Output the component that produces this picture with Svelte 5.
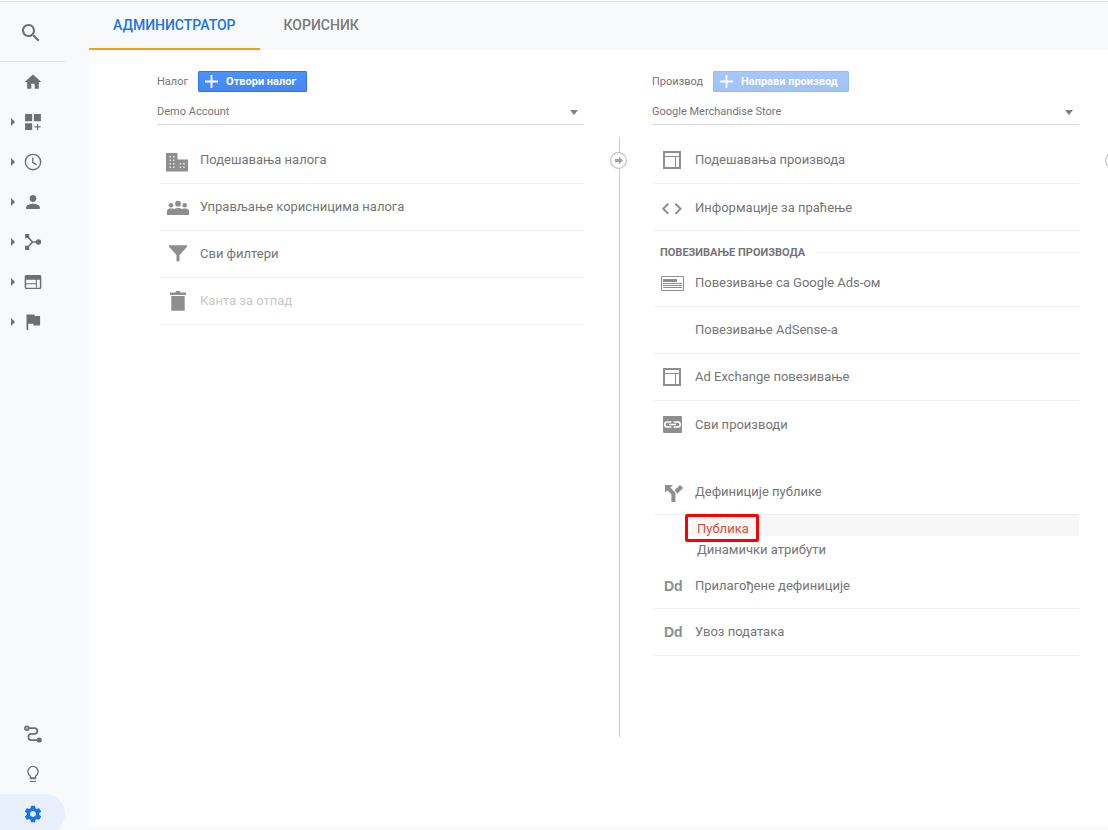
<script>
  const NAV = [
    { icon: 'home', expandable: false },
    { icon: 'dashboard', expandable: true },
    { icon: 'clock', expandable: true },
    { icon: 'person', expandable: true },
    { icon: 'flow', expandable: true },
    { icon: 'web', expandable: true },
    { icon: 'flag', expandable: true },
  ]
  const NAV_BOTTOM = ['path', 'bulb', 'gear']

  const ACCOUNT = [
    { icon: 'building', label: 'Подешавања налога' },
    { icon: 'people', label: 'Управљање корисницима налога' },
    { icon: 'filter', label: 'Сви филтери' },
    { icon: 'trash', label: 'Канта за отпад', disabled: true },
  ]
  const PROPERTY = [
    { icon: 'window', label: 'Подешавања производа' },
    { icon: 'code', label: 'Информације за праћење', low: true },
  ]
  const LINKING = [
    { icon: 'ads', label: 'Повезивање са Google Ads-ом' },
    { icon: '', label: 'Повезивање AdSense-а' },
    { icon: 'window', label: 'Ad Exchange повезивање' },
    { icon: 'link', label: 'Сви производи', low: true, plain: true },
  ]
  const DATA = [
    { icon: 'dd', label: 'Прилагођене дефиниције', low: true },
    { icon: 'dd', label: 'Увоз података' },
  ]

  let tab = $state('admin')
</script>

{#snippet navIcon(name)}
  <svg class="nav-icon" viewBox="0 0 24 24" fill="currentColor">
    {#if name === 'home'}
      <path d="M10 20v-6h4v6h5v-8h3L12 3 2 12h3v8z" />
    {:else if name === 'dashboard'}
      <path d="M2.500 2.500h8.500v8.500H2.500zM13 2.500h8.500v8.500H13zM2.500 13.500h8.500v8H2.500zM16.800 14.300h1.400v2.900h2.900v1.400h-2.900v2.900h-1.400v-2.900h-2.900v-1.400h2.900z" />
    {:else if name === 'clock'}
      <circle cx="12" cy="12" r="9.200" fill="none" stroke="currentColor" stroke-width="1.700" />
      <path d="M11.700 6.500v6l4.600 3" fill="none" stroke="currentColor" stroke-width="1.600" />
    {:else if name === 'person'}
      <path d="M12 12c2.200 0 4.100-1.900 4.100-4.200S14.200 3.600 12 3.600 7.900 5.500 7.900 7.800 9.800 12 12 12zm0 2c-3 0-8.200 1.400-8.200 4.200V20.500h16.400v-2.300C20.200 15.400 15 14 12 14z" />
    {:else if name === 'flow'}
      <path d="M5 5l6.500 7L5 19M11 12h7" fill="none" stroke="currentColor" stroke-width="1.900" />
      <path d="M2.500 2.500h5v5h-5zM2.500 16.500h5v5h-5z" />
      <circle cx="18.600" cy="12" r="3.200" />
    {:else if name === 'web'}
      <path fill-rule="evenodd" d="M4 3.500h16a2 2 0 0 1 2 2v13a2 2 0 0 1-2 2H4a2 2 0 0 1-2-2v-13a2 2 0 0 1 2-2zM3.800 9.300v4.100h11.700V9.300zM3.800 14.600v4.200h11.700v-4.200zM16.700 9.300v9.500h3.500V9.300z" />
    {:else if name === 'flag'}
      <path d="M14 4.800l-.4-1.800H4.200v18.500h2.100v-7.300h6l.4 2h7.800V4.800z" />
    {:else if name === 'path'}
      <path d="M5.500 5h8.300a3.400 3.400 0 0 1 0 6.800h-3.600a3.700 3.700 0 0 0 0 7.400H19" fill="none" stroke="currentColor" stroke-width="2.100" />
      <circle cx="4.600" cy="5" r="2.500" fill="#aaa" stroke="currentColor" stroke-width="1.600" />
      <circle cx="19.500" cy="19.200" r="3.100" />
    {:else if name === 'bulb'}
      <path d="M9 17v-2.300c-1.900-1.200-3.200-3.100-3.200-5.300a6.200 6.600 0 0 1 12.400 0c0 2.200-1.300 4.100-3.200 5.300V17z" fill="none" stroke="currentColor" stroke-width="1.600" />
      <path d="M8.200 16.300h7.600v2H8.200zM8.400 20.300h7.200v1.400H8.400z" />
    {:else if name === 'gear'}
      <path d="M19.430 12.980c.040-.320.070-.640.070-.980s-.030-.660-.070-.980l2.110-1.650c.190-.150.240-.420.120-.640l-2-3.460c-.120-.220-.390-.300-.610-.220l-2.490 1c-.520-.400-1.080-.730-1.690-.980l-.380-2.650C14.460 2.180 14.250 2 14 2h-4c-.250 0-.460.180-.490.420l-.380 2.650c-.610.250-1.170.590-1.690.980l-2.490-1c-.230-.090-.490 0-.610.220l-2 3.460c-.130.220-.070.490.120.640l2.110 1.650c-.040.320-.070.650-.070.980s.030.660.070.980l-2.110 1.650c-.190.150-.240.420-.120.640l2 3.460c.120.220.390.300.610.220l2.490-1c.520.400 1.080.730 1.690.980l.380 2.650c.030.240.240.420.490.420h4c.250 0 .460-.180.490-.420l.380-2.650c.610-.250 1.170-.590 1.690-.980l2.490 1c.230.090.490 0 .610-.220l2-3.460c.120-.220.070-.490-.120-.640l-2.110-1.650zM12 15.500c-1.930 0-3.500-1.570-3.500-3.500s1.570-3.500 3.500-3.500 3.500 1.570 3.500 3.500-1.570 3.500-3.500 3.500z" />
    {/if}
  </svg>
{/snippet}

{#snippet rowIcon(name)}
  <svg class="row-icon" viewBox="0 0 28 28" fill="currentColor">
    {#if name === 'building'}
      <path d="M3 7h11.500v6.500H25V25.500H3z" />
      <path d="M6.500 10h1.500v1.500H6.500zM10 10h1.500v1.500H10zM6.500 13.500h1.500v1.500H6.500zM10 13.500h1.500v1.500H10zM6.500 17h1.500v1.500H6.500zM10 17h1.500v1.500H10zM6.500 20.500h1.500v1.500H6.500zM10 20.500h1.500v1.500H10zM16.700 17h1.500v1.500h-1.500zM20.200 17h1.500v1.500h-1.500zM16.700 20.500h1.500v1.500h-1.500zM20.200 20.500h1.500v1.500h-1.500z" fill="#e8e8e8" />
    {:else if name === 'people'}
      <circle cx="15" cy="10.700" r="2.900" />
      <circle cx="8" cy="12.300" r="2.300" />
      <circle cx="21.700" cy="12.300" r="2.300" />
      <path d="M4 22v-4c0-1.800 2.200-2.400 4.300-2.400 1.200 0 2.200.1 2.900.4 1-.6 2.400-.9 3.900-.9s2.900.3 3.900.9c.7-.3 1.500-.4 2.600-.4 2.200 0 4.400.6 4.400 2.400v4z" />
    {:else if name === 'filter'}
      <path d="M6 5.300h18v1.500L16.500 15v6.200h-3V15L6 6.800z" />
    {:else if name === 'trash'}
      <path d="M7 5.500h5.300l1-1.500h3.400l1 1.500H23V8H7zM8.300 9h13.400v14.800H8.300z" />
    {:else if name === 'window'}
      <path d="M6 6h16v16H6z" fill="none" stroke="currentColor" stroke-width="2" />
      <path d="M6 10.500h16M17.500 10.500V22" fill="none" stroke="currentColor" stroke-width="1" />
    {:else if name === 'code'}
      <path d="M10.300 10.700L5.200 15.800l5.100 5.100M17.400 10.700l5.100 5.100-5.100 5.100" fill="none" stroke="currentColor" stroke-width="2" />
    {:else if name === 'ads'}
      <path d="M3.500 7.500h22v14h-22z" fill="none" stroke="currentColor" />
      <path d="M5 10h14v3H5zM5 14h19v1H5zM5 16h19v1H5zM5 18h19v1H5z" />
    {:else if name === 'link'}
      <rect x="5" y="6" width="19" height="17" rx="1" />
      <path d="M13.300 12h-4a2.500 2.500 0 0 0 0 5h4M15.700 12h4a2.500 2.500 0 0 1 0 5h-4M11 14.500h7" fill="none" stroke="#fff" stroke-width="1.600" />
    {:else if name === 'split'}
      <path d="M7 8h8l-2.600 2.600 5 5.200V25h-4v-7.500L9.500 13.300 7 15.800z" />
      <path d="M22 8L25.200 11l-6 5.700-2.500-3.500z" />
    {:else if name === 'dd'}
      <text x="6" y="19" class="dd">Dd</text>
    {/if}
  </svg>
{/snippet}

{#snippet rows(items)}
  {#each items as item}
    <div class="row" class:low={item.low} class:disabled={item.disabled} class:plain={item.plain} class:text-icon={item.icon === 'dd'}>
      {@render rowIcon(item.icon)}
      <span>{item.label}</span>
    </div>
  {/each}
{/snippet}

{#snippet divider()}
  <div class="divider">
    <svg class="knob" viewBox="0 0 17 17">
      <circle cx="8.500" cy="8.500" r="7.900" fill="#fff" stroke="#c4c4c4" stroke-width="1.200" />
      <path d="M5 7h4V4.800L13 8.500 9 12.200V10H5z" fill="#a0a0a0" />
    </svg>
  </div>
{/snippet}

{#snippet head(label, action, value, off)}
  <div class="head">
    <span class="head-label">{label}</span>
    <button class="create" disabled={off}>
      <svg viewBox="0 0 13 13"><path d="M6.500 0v13M0 6.500h13" stroke="#fff" stroke-width="1.800" /></svg>
      <span>{action}</span>
    </button>
  </div>
  <div class="picker">
    <span>{value}</span>
    <i class="arrow"></i>
  </div>
{/snippet}

<div class="app">
  <nav>
    <div class="search">
      <svg viewBox="0 0 24 24" fill="currentColor">
        <path d="M15.500 14h-.790l-.280-.270C15.410 12.590 16 11.110 16 9.500 16 5.910 13.090 3 9.500 3S3 5.910 3 9.500 5.910 16 9.500 16c1.610 0 3.090-.590 4.230-1.570l.270.280v.790l5 4.990L20.490 19l-4.990-5zm-6 0C7.010 14 5 11.990 5 9.500S7.010 5 9.500 5 14 7.010 14 9.500 11.990 14 9.500 14z" />
      </svg>
    </div>
    {#each NAV as item}
      <div class="nav-item">
        <i class="caret" class:hidden={!item.expandable}></i>
        {@render navIcon(item.icon)}
      </div>
    {/each}
    <div class="spacer"></div>
    {#each NAV_BOTTOM as icon}
      <div class="nav-item" class:active={icon === 'gear'}>
        <i class="caret hidden"></i>
        {@render navIcon(icon)}
      </div>
    {/each}
  </nav>

  <main>
    <div class="tabs">
      <button class="tab" class:current={tab === 'admin'} onclick={() => (tab = 'admin')}>АДМИНИСТРАТОР</button>
      <button class="tab" class:current={tab === 'user'} onclick={() => (tab = 'user')}>КОРИСНИК</button>
    </div>

    <div class="panel">
      <section class="col account">
        {@render head('Налог', 'Отвори налог', 'Demo Account', false)}
        <div class="rows">
          {@render rows(ACCOUNT)}
        </div>
      </section>

      {@render divider()}

      <section class="col property">
        {@render head('Производ', 'Направи производ', 'Google Merchandise Store', true)}
        <div class="rows">
          {@render rows(PROPERTY)}
          <div class="group"><span>ПОВЕЗИВАЊЕ ПРОИЗВОДА</span></div>
          {@render rows(LINKING)}
          <div class="gap"></div>
          <div class="row low">
            {@render rowIcon('split')}
            <span>Дефиниције публике</span>
          </div>
          <div class="subs">
            <div class="sub selected">Публика<i class="mark"></i></div>
            <div class="sub">Динамички атрибути</div>
          </div>
          {@render rows(DATA)}
        </div>
      </section>

      {@render divider()}
    </div>
  </main>
</div>

<style>
  :global(body) {
    overflow: hidden;
    background: #fff;
  }

  .app {
    display: flex;
    box-sizing: border-box;
    height: 829px;
    margin-top: 1px;
    border-top: 1px solid #dadce0;
    background: #f8f9fb;
    overflow: hidden;
    font-family: Roboto, 'Noto Sans', sans-serif;
    color: #757575;
  }

  /* sidebar */
  nav {
    display: flex;
    flex-direction: column;
    flex: 0 0 89px;
    height: 832px;
    color: #6f6f6f;
  }

  .search {
    box-sizing: border-box;
    width: 65px;
    height: 60px;
    padding: 19px 0 0 19px;
    border-bottom: 1px solid #e3e5e8;
  }
  .search svg { display: block; width: 24px; height: 24px; }

  .nav-item {
    display: flex;
    align-items: center;
    gap: 8px;
    flex: 0 0 40px;
    width: 65px;
    padding-left: 11px;
    box-sizing: border-box;
  }
  .nav-item.active {
    background: #e8f0fe;
    color: #1a73e8;
    border-radius: 0 20px 20px 0;
  }
  .nav-icon { width: 20px; height: 20px; }
  .spacer { flex: 1; }

  .caret {
    width: 0;
    height: 0;
    border: 4px solid transparent;
    border-left-color: #6f6f6f;
    border-right: 0;
  }
  .caret.hidden { visibility: hidden; }

  /* tabs */
  main {
    display: flex;
    flex-direction: column;
    flex: 1;
    min-width: 0;
  }

  .tabs { display: flex; height: 48px; }

  .tab {
    padding: 0 24px;
    border: 0;
    border-bottom: 2px solid transparent;
    background: none;
    font: 500 14px Roboto, sans-serif;
    color: #7a7a7a;
  }
  .tab.current { color: #1a73e8; border-bottom-color: #ff9d00; }

  /* columns */
  .panel {
    display: flex;
    height: 777px;
    padding-left: 68px;
    background: #fff;
    overflow: hidden;
  }

  .col { flex: 0 0 427px; padding-top: 21px; }

  .head {
    display: flex;
    align-items: center;
    gap: 10px;
    height: 21px;
    font-size: 11px;
  }

  .create {
    display: flex;
    align-items: center;
    gap: 8px;
    box-sizing: border-box;
    height: 21px;
    padding: 0 10px 0 6px;
    border: 1px solid #3079ed;
    border-radius: 1px;
    background: linear-gradient(#4d90fe, #4787ed);
    color: #fff;
    font: 700 11px Roboto, sans-serif;
  }
  .create:disabled { opacity: .5; }
  .create svg { width: 13px; height: 13px; }

  .picker {
    display: flex;
    align-items: center;
    justify-content: space-between;
    height: 32px;
    padding-right: 6px;
    border-bottom: 1px solid #dadada;
    font-size: 11px;
  }
  .picker span { padding-top: 6px; }
  .arrow {
    margin-top: 8px;
    border: 4px solid transparent;
    border-top: 5px solid #808080;
    border-bottom: 0;
  }

  .rows { padding: 12px 0 0 3px; }
  .property .rows { padding-left: 2px; }

  .row {
    display: flex;
    align-items: center;
    gap: 9px;
    box-sizing: border-box;
    height: 47px;
    padding-left: 3px;
    border-bottom: 1px solid #efefef;
    font-size: 13px;
  }
  .row span { padding-bottom: 2px; }
  .property .row { padding-left: 4px; }
  .row.plain { border-bottom-color: transparent; }
  .row.disabled span { color: #c8c8c8; }
  .row.low span { padding-bottom: 0; }
  .row-icon { flex: none; width: 28px; height: 28px; color: #8e8e8e; }
  .text-icon .row-icon { margin-bottom: 1px; }
  .text-icon.low .row-icon { margin: 1px 0 0; }
  .dd { font: 700 14px 'Liberation Sans', Arial, sans-serif; }

  .group {
    display: flex;
    align-items: center;
    gap: 11px;
    height: 29px;
    padding-left: 6px;
    font-size: 11px;
    font-weight: 700;
  }
  .group span { padding-top: 13px; }
  .group::after {
    content: '';
    flex: 1;
    margin-top: 13px;
    border-top: 1px solid #efefef;
  }

  .gap { height: 20px; }

  .subs {
    height: 47px;
    padding-left: 37px;
    font-size: 13px;
  }
  .sub { position: relative; height: 21px; padding-left: 6px; line-height: 27px; }
  .sub.selected { background: #f7f7f7; color: #dd4b39; }

  /* highlight frame over the selected entry */
  .mark {
    position: absolute;
    left: -6px;
    top: -1px;
    box-sizing: border-box;
    width: 74px;
    height: 28px;
    border: 3px solid #ff0000;
    border-radius: 2px;
  }

  .divider {
    position: relative;
    flex: 0 0 68px;
    height: 600px;
    margin-top: 87px;
    background: linear-gradient(#ccc, #ccc) 35px 0 / 1px 100% no-repeat;
  }
  .knob { position: absolute; left: 26px; top: 15px; width: 17px; height: 17px; }
</style>
